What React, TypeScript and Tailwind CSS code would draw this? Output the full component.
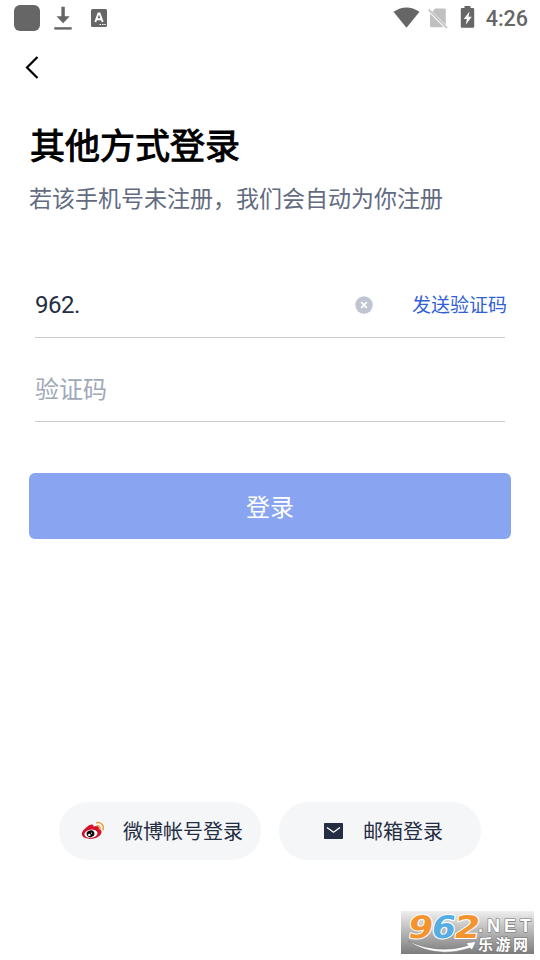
import React from 'react';

function StatusBar() {
  return (
    <header className="flex h-9 shrink-0 items-center justify-between pl-3.5 pr-3 text-[#666666]">
      <div className="flex items-center">
        <div className="size-[26px] rounded-[6px] bg-[#666666]" />
        <svg className="ml-3.5 h-6 w-[18px]" viewBox="0 0 18 24" fill="currentColor">
          <path d="M7.4 0.7h3.4v9.5h4.9L9.100 17.3 2.500 10.200h4.900z" />
          <rect x="0.300" y="21.2" width="17.400" height="2.400" />
        </svg>
        <svg className="ml-[19px] h-[18px] w-4" viewBox="0 0 16 18">
          <rect width="16" height="18" rx="1.5" fill="currentColor" />
          <path d="M4.300 13 7.4 4.500h1.200L11.700 13M5.3 10.2h5.4" fill="none" stroke="#fff" strokeWidth="1.900" />
          <path d="M8.5 15.5h1.500M11 15.500h1.500M13.300 15.500h1.400" stroke="#fff" strokeWidth="1.200" />
        </svg>
      </div>
      <div className="flex items-center">
        <svg className="h-[22px] w-[27px]" viewBox="0 0 27 22" fill="currentColor">
          <path d="M0.500 4.800Q13.500-3.900 26.500 4.800L13.500 20.800z" />
        </svg>
        <svg className="ml-2 h-[22px] w-5" viewBox="0 0 20 22">
          <path d="M7.300 1.500h9a1.500 1.500 0 0 1 1.500 1.500v14.900L4.300 4.500zM2 6.500 15.700 20.300H3.500A1.500 1.500 0 0 1 2 18.800z" fill="#c0c0c0" />
          <path d="M0.700 2.700 19 21" stroke="#c0c0c0" strokeWidth="1.700" />
        </svg>
        <svg className="mb-1 ml-3 h-[23px] w-[15px]" viewBox="0 0 15 23">
          <path d="M4.500 1h6v2H13a1.200 1.200 0 0 1 1.200 1.200v17.300A1.200 1.200 0 0 1 13 22.700H2a1.200 1.200 0 0 1-1.200-1.200V4.200A1.200 1.200 0 0 1 2 3h2.500z" fill="currentColor" />
          <path d="M9.500 6.500 3.800 14h3.100L5.800 19.700 11.700 11.800H8.500z" fill="#fff" />
        </svg>
        <span className="ml-[11px] h-6 pt-px font-[Roboto,sans-serif] text-[21.500px] font-medium leading-6">4:26</span>
      </div>
    </header>
  );
}

function WeiboIcon() {
  return (
    <svg className="h-5 w-6" viewBox="0 0 24 20">
      <path d="M6.500 5.500C9.500 3 12.700 2.800 12.500 5.600c3.600-1.300 6.200-.4 5.200 2.200 3 .8 3.600 3.400 1.700 5.900-3.600 5.200-15.900 5.600-18.200.900C-.300 11.700 3.200 8 6.500 5.500z" fill="#d5102d" />
      <ellipse cx="10" cy="12.700" rx="6.600" ry="4.100" fill="#fff" transform="rotate(-7 10 12.700)" />
      <ellipse cx="9.500" cy="12.800" rx="3.900" ry="3.300" fill="#080808" transform="rotate(-15 9.500 12.800)" />
      <circle cx="8.300" cy="13.900" r="1.200" fill="#fff" />
      <circle cx="10.600" cy="12.200" r="0.600" fill="#fff" />
      <path d="M15.500 1.700c4.500-.9 7.700 2.700 6.600 7M16 4.800c2-.4 3.500 1.100 3 3.200" fill="none" stroke="#e9a33c" strokeWidth="1.500" strokeLinecap="round" />
    </svg>
  );
}

function MailIcon() {
  return (
    <svg className="h-4 w-[19px]" viewBox="0 0 19 16">
      <rect width="19" height="16" rx="0.700" fill="#252d43" />
      <path d="m3 4.500 6.500 4.700L16 4.500" fill="none" stroke="#fff" strokeWidth="1.400" />
    </svg>
  );
}

function Watermark() {
  return (
    <div className="absolute left-[401px] top-[911px] h-[43px] w-[133px] bg-linear-to-b from-[#efefef] to-[#7d7d7d]">
      <svg className="size-full overflow-visible" viewBox="0 0 133 43">
        <path d="M7 30Q37 44 67 34.500l-2-2.500 10-1.500-4 8.500-2-2Q34 48 7 30z" fill="#fff" stroke="#777" strokeWidth="0.500" />
        <g transform="translate(0 26.500) skewX(-10)" fontFamily="DejaVu Sans, sans-serif" fontWeight="700" fontSize="31" stroke="#fff" strokeWidth="2" paintOrder="stroke" strokeLinejoin="round">
          <text x="5.500" y="0" textLength="25" lengthAdjust="spacingAndGlyphs" fill="#f39431">9</text>
          <text x="29" y="0" textLength="24" lengthAdjust="spacingAndGlyphs" fill="#55aee2">6</text>
          <text x="51.500" y="0" textLength="26" lengthAdjust="spacingAndGlyphs" fill="#f39431">2</text>
        </g>
        <g fill="#fff" stroke="#777" strokeWidth="1.200" paintOrder="stroke" fontWeight="700">
          <text x="77" y="20.500" fontFamily="Liberation Sans, Arial, sans-serif" fontSize="18" textLength="53" lengthAdjust="spacing">.NET</text>
          <text x="77" y="38.500" fontFamily="Noto Sans CJK SC, sans-serif" fontSize="15" textLength="50">乐游网</text>
        </g>
      </svg>
    </div>
  );
}

export default function App() {
  return (
    <div className="relative flex h-[960px] w-[540px] flex-col overflow-hidden bg-white font-[Roboto,'Noto_Sans_CJK_SC',sans-serif] text-[#252d43]">
      <StatusBar />
      <nav className="flex h-[62px] shrink-0 items-center pl-6">
        <button aria-label="返回">
          <svg className="h-6 w-4" viewBox="0 0 16 24">
            <path d="M13.500 2 3 12.500 13.500 23" fill="none" stroke="#000" strokeWidth="2.200" />
          </svg>
        </button>
      </nav>
      <main className="flex flex-col px-[29px] pt-6">
        <h1 className="h-[52px] whitespace-nowrap pl-px text-[35px] font-normal leading-[52px] text-black [-webkit-text-stroke:1px_black]">其他方式登录</h1>
        <p className="mt-2 h-9 text-[23px] leading-9 text-[#626b80]">若该手机号未注册，我们会自动为你注册</p>
        <div className="mx-1.5 mt-[53px] flex h-[67px] items-center border-b border-[#c9cfd0]">
          <input className="mt-0.5 w-[319.500px] text-[24px] leading-9 tracking-[-0.5px] outline-none" defaultValue="962." />
          <button aria-label="清除" className="mt-px">
            <svg className="size-[18px]" viewBox="0 0 18 18">
              <circle cx="9" cy="9" r="8.700" fill="#bfc5d0" />
              <path d="m6.200 6.200 5.600 5.600M11.800 6.200l-5.600 5.600" stroke="#fff" strokeWidth="1.700" />
            </svg>
          </button>
          <button className="-mr-0.5 ml-auto mt-[3px] whitespace-nowrap text-[19px] leading-7 text-[#315fd5]">发送验证码</button>
        </div>
        <div className="mx-1.5 flex h-[84px] items-center border-b border-[#c9cfd0]">
          <input className="mt-5 w-full text-[24px] leading-9 outline-none placeholder:text-[#a0a8b8]" placeholder="验证码" />
        </div>
        <button className="mt-[51px] h-[66px] rounded-[6px] bg-[#89a5f1] pt-[3px] text-[24px] text-white">登录</button>
      </main>
      <footer className="mb-[100px] mt-auto flex justify-center gap-[18px] text-[20px]">
        <button className="flex h-[58px] w-[202px] items-center rounded-full bg-[#f4f6f8] pl-[22px]">
          <WeiboIcon />
          <span className="ml-[18px] mt-px whitespace-nowrap">微博帐号登录</span>
        </button>
        <button className="flex h-[58px] w-[202px] items-center rounded-full bg-[#f4f6f8] pl-[45px]">
          <MailIcon />
          <span className="ml-5 mt-px whitespace-nowrap">邮箱登录</span>
        </button>
      </footer>
      <Watermark />
    </div>
  );
}
